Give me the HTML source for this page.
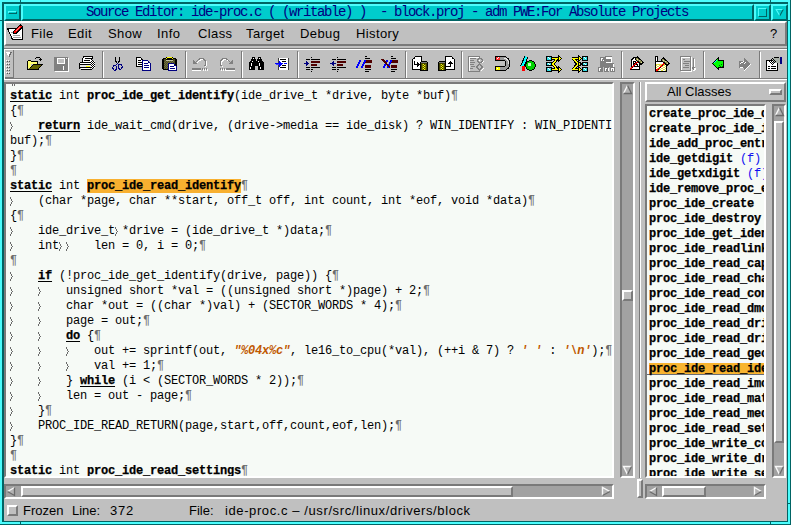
<!DOCTYPE html>
<html><head><meta charset="utf-8"><style>
html,body{margin:0;padding:0;}
body{width:791px;height:525px;position:relative;overflow:hidden;background:#4cfcfc;}
body div, body svg{position:absolute;}
.code{left:6px;top:84px;width:606px;height:392px;overflow:hidden;}
.cl{left:4px;height:15px;white-space:pre;font-family:"Liberation Mono",monospace;font-size:12px;letter-spacing:-0.2px;line-height:15px;color:#000;}
.k{font-weight:bold;-webkit-text-stroke:0.25px #000;text-decoration:underline;text-underline-offset:2px;text-decoration-thickness:1px;}
.b{font-weight:bold;-webkit-text-stroke:0.25px #000;}
.h{font-weight:bold;background:#f8b030;-webkit-text-stroke:0.25px #000;}
.s{font-weight:bold;font-style:italic;color:#c05800;}
.t{color:#808080;}
.p{color:#6c6c6c;}
.list{left:647px;top:106px;width:117px;height:370px;overflow:hidden;}
.li{left:0;width:118px;height:15px;white-space:pre;font-family:"Liberation Mono",monospace;font-size:12px;letter-spacing:-0.2px;line-height:15px;font-weight:bold;color:#000;text-indent:2px;-webkit-text-stroke:0.25px #000;}
.sel1{left:0;top:255px;width:117px;height:14px;background:#f4f6fc;}
.sel2{left:2px;top:2px;width:115px;height:11px;background:#f8b430;}
.sel3{left:0;top:13px;width:117px;height:1px;background:#686c74;}
.f{font-weight:normal;color:#1010f0;-webkit-text-stroke:0;}
</style></head><body>
<div style="left:0px;top:0px;width:791px;height:525px;background:#4cfcfc;"></div><div style="left:2px;top:2px;width:786px;height:520px;background:#006464;"></div><div style="left:790px;top:0px;width:1px;height:525px;background:#006464;"></div><div style="left:0px;top:524px;width:791px;height:1px;background:#006464;"></div><div style="left:4px;top:21px;width:783px;height:500px;background:#c0c0c0;"></div><div style="left:20px;top:0px;width:1px;height:2px;background:#006464;"></div><div style="left:0px;top:20px;width:2px;height:1px;background:#006464;"></div><div style="left:20px;top:522px;width:1px;height:2px;background:#006464;"></div><div style="left:770px;top:0px;width:1px;height:2px;background:#006464;"></div><div style="left:788px;top:20px;width:2px;height:1px;background:#006464;"></div><div style="left:788px;top:503px;width:2px;height:1px;background:#006464;"></div><div style="left:770px;top:522px;width:1px;height:2px;background:#006464;"></div><div style="left:4px;top:4px;width:17px;height:17px;background:#006464;"></div><div style="left:4px;top:4px;width:17px;height:17px;background:#4cfcfc;clip-path:polygon(0 0,100% 0,calc(100% - 2px) 2px,2px 2px,2px calc(100% - 2px),0 100%)"></div><div style="left:6px;top:6px;width:13px;height:13px;background:#00cccc;"></div><div style="left:8px;top:11px;width:9px;height:3px;background:#006464;"></div><div style="left:8px;top:11px;width:9px;height:3px;background:#4cfcfc;clip-path:polygon(0 0,100% 0,calc(100% - 1px) 1px,1px 1px,1px calc(100% - 1px),0 100%)"></div><div style="left:9px;top:12px;width:7px;height:1px;background:#00cccc;"></div><div style="left:21px;top:4px;width:733px;height:17px;background:#006464;"></div><div style="left:21px;top:4px;width:733px;height:17px;background:#4cfcfc;clip-path:polygon(0 0,100% 0,calc(100% - 2px) 2px,2px 2px,2px calc(100% - 2px),0 100%)"></div><div style="left:23px;top:6px;width:729px;height:13px;background:#00cccc;"></div><div style="left:754px;top:4px;width:17px;height:17px;background:#006464;"></div><div style="left:754px;top:4px;width:17px;height:17px;background:#4cfcfc;clip-path:polygon(0 0,100% 0,calc(100% - 2px) 2px,2px 2px,2px calc(100% - 2px),0 100%)"></div><div style="left:756px;top:6px;width:13px;height:13px;background:#00cccc;"></div><div style="left:758px;top:8px;width:9px;height:9px;background:#006464;"></div><div style="left:758px;top:8px;width:9px;height:9px;background:#4cfcfc;clip-path:polygon(0 0,100% 0,calc(100% - 1px) 1px,1px 1px,1px calc(100% - 1px),0 100%)"></div><div style="left:759px;top:9px;width:7px;height:7px;background:#00cccc;"></div><div style="left:771px;top:4px;width:17px;height:17px;background:#006464;"></div><div style="left:771px;top:4px;width:17px;height:17px;background:#4cfcfc;clip-path:polygon(0 0,100% 0,calc(100% - 2px) 2px,2px 2px,2px calc(100% - 2px),0 100%)"></div><div style="left:773px;top:6px;width:13px;height:13px;background:#00cccc;"></div><svg style="left:0;top:0" width="791" height="21"><path d="M779.8 15.8 L776.2 9.5 H783" fill="none" stroke="#4cfcfc" stroke-width="1.1"/><path d="M783.2 9.5 L779.8 15.8" fill="none" stroke="#006464" stroke-width="1.1"/></svg><div style="left:86px;top:3px;white-space:pre;font-family:'Liberation Mono',monospace;font-size:14px;letter-spacing:-1.4px;color:#000080;line-height:18px">Source Editor: ide-proc.c ( (writable) )  - block.proj - adm PWE:For Absolute Projects</div><div style="left:4px;top:21px;width:783px;height:25px;background:#7a7a7a;"></div><div style="left:4px;top:21px;width:783px;height:25px;background:#ffffff;clip-path:polygon(0 0,100% 0,calc(100% - 2px) 2px,2px 2px,2px calc(100% - 2px),0 100%)"></div><div style="left:6px;top:23px;width:779px;height:21px;background:#c0c0c0;"></div><div style="left:31px;top:26px;white-space:pre;font-family:'Liberation Sans',sans-serif;font-size:13px;color:#000;line-height:16px;letter-spacing:0.4px">File</div><div style="left:68px;top:26px;white-space:pre;font-family:'Liberation Sans',sans-serif;font-size:13px;color:#000;line-height:16px;letter-spacing:0.4px">Edit</div><div style="left:108px;top:26px;white-space:pre;font-family:'Liberation Sans',sans-serif;font-size:13px;color:#000;line-height:16px;letter-spacing:0.4px">Show</div><div style="left:157px;top:26px;white-space:pre;font-family:'Liberation Sans',sans-serif;font-size:13px;color:#000;line-height:16px;letter-spacing:0.4px">Info</div><div style="left:198px;top:26px;white-space:pre;font-family:'Liberation Sans',sans-serif;font-size:13px;color:#000;line-height:16px;letter-spacing:0.4px">Class</div><div style="left:246px;top:26px;white-space:pre;font-family:'Liberation Sans',sans-serif;font-size:13px;color:#000;line-height:16px;letter-spacing:0.4px">Target</div><div style="left:300px;top:26px;white-space:pre;font-family:'Liberation Sans',sans-serif;font-size:13px;color:#000;line-height:16px;letter-spacing:0.4px">Debug</div><div style="left:356px;top:26px;white-space:pre;font-family:'Liberation Sans',sans-serif;font-size:13px;color:#000;line-height:16px;letter-spacing:0.4px">History</div><div style="left:770px;top:26px;white-space:pre;font-family:'Liberation Sans',sans-serif;font-size:13px;color:#000;line-height:16px;letter-spacing:0.4px">?</div><div style="left:4px;top:48px;width:783px;height:1px;background:#7a7a7a;"></div><div style="left:4px;top:49px;width:783px;height:1px;background:#ffffff;"></div><div style="left:4px;top:78px;width:783px;height:1px;background:#7a7a7a;"></div><div style="left:4px;top:79px;width:783px;height:1px;background:#ffffff;"></div><div style="left:4px;top:49px;width:1px;height:30px;background:#ffffff;"></div><div style="left:5px;top:50px;width:8px;height:27px;background:#c0c0c0;"></div><div style="left:13px;top:50px;width:1px;height:28px;background:#7a7a7a;"></div><div style="left:5px;top:77px;width:8px;height:1px;background:#7a7a7a;"></div><svg style="left:5px;top:50px" width="8" height="27" shape-rendering="crispEdges"><polygon points="1,2 6,2 4,7" fill="#ffffff"/><path d="M6.5 2 L4 6.5" stroke="#6a6a6a" stroke-width="1.3"/><rect x="1" y="10" width="1" height="1" fill="#ffffff"/><rect x="2" y="11" width="1" height="1" fill="#555"/><rect x="3" y="10" width="1" height="1" fill="#ffffff"/><rect x="4" y="11" width="1" height="1" fill="#555"/><rect x="1" y="13" width="1" height="1" fill="#ffffff"/><rect x="2" y="14" width="1" height="1" fill="#555"/><rect x="3" y="13" width="1" height="1" fill="#ffffff"/><rect x="4" y="14" width="1" height="1" fill="#555"/><rect x="1" y="16" width="1" height="1" fill="#ffffff"/><rect x="2" y="17" width="1" height="1" fill="#555"/><rect x="3" y="16" width="1" height="1" fill="#ffffff"/><rect x="4" y="17" width="1" height="1" fill="#555"/><rect x="1" y="19" width="1" height="1" fill="#ffffff"/><rect x="2" y="20" width="1" height="1" fill="#555"/><rect x="3" y="19" width="1" height="1" fill="#ffffff"/><rect x="4" y="20" width="1" height="1" fill="#555"/><rect x="1" y="22" width="1" height="1" fill="#ffffff"/><rect x="2" y="23" width="1" height="1" fill="#555"/><rect x="3" y="22" width="1" height="1" fill="#ffffff"/><rect x="4" y="23" width="1" height="1" fill="#555"/></svg><div style="left:102px;top:51px;width:1px;height:27px;background:#7a7a7a;"></div><div style="left:103px;top:52px;width:1px;height:26px;background:#ffffff;"></div><div style="left:185px;top:51px;width:1px;height:27px;background:#7a7a7a;"></div><div style="left:186px;top:52px;width:1px;height:26px;background:#ffffff;"></div><div style="left:241px;top:51px;width:1px;height:27px;background:#7a7a7a;"></div><div style="left:242px;top:52px;width:1px;height:26px;background:#ffffff;"></div><div style="left:297px;top:51px;width:1px;height:27px;background:#7a7a7a;"></div><div style="left:298px;top:52px;width:1px;height:26px;background:#ffffff;"></div><div style="left:405px;top:51px;width:1px;height:27px;background:#7a7a7a;"></div><div style="left:406px;top:52px;width:1px;height:26px;background:#ffffff;"></div><div style="left:461px;top:51px;width:1px;height:27px;background:#7a7a7a;"></div><div style="left:462px;top:52px;width:1px;height:26px;background:#ffffff;"></div><div style="left:621px;top:51px;width:1px;height:27px;background:#7a7a7a;"></div><div style="left:622px;top:52px;width:1px;height:26px;background:#ffffff;"></div><div style="left:703px;top:51px;width:1px;height:27px;background:#7a7a7a;"></div><div style="left:704px;top:52px;width:1px;height:26px;background:#ffffff;"></div><div style="left:759px;top:51px;width:1px;height:27px;background:#7a7a7a;"></div><div style="left:760px;top:52px;width:1px;height:26px;background:#ffffff;"></div><div style="left:4px;top:82px;width:610px;height:396px;background:#ffffff;"></div><div style="left:4px;top:82px;width:610px;height:396px;background:#7a7a7a;clip-path:polygon(0 0,100% 0,calc(100% - 2px) 2px,2px 2px,2px calc(100% - 2px),0 100%)"></div><div style="left:6px;top:84px;width:606px;height:392px;background:#f6faf6;"></div><div style="left:620px;top:82px;width:15px;height:396px;background:#ffffff;"></div><div style="left:620px;top:82px;width:15px;height:396px;background:#7a7a7a;clip-path:polygon(0 0,100% 0,calc(100% - 2px) 2px,2px 2px,2px calc(100% - 2px),0 100%)"></div><div style="left:622px;top:84px;width:11px;height:392px;background:#a2a2a2;"></div><svg style="left:0;top:0" width="791" height="525"><polygon points="627.5,85 632,94 623,94" fill="#b4b4b4"/><path d="M623.5 93.5 L627.5 85.5" stroke="#f8f8f8" stroke-width="1.4" fill="none"/><path d="M627.5 85.5 L631.5 93.5 H623.5" stroke="#6a6a6a" stroke-width="1.3" fill="none"/></svg><svg style="left:0;top:0" width="791" height="525"><polygon points="623,466 632,466 627.5,475" fill="#b4b4b4"/><path d="M627.5 474.5 L623.5 466.5 H631.5" stroke="#f8f8f8" stroke-width="1.4" fill="none"/><path d="M631.5 466.5 L627.5 474.5" stroke="#6a6a6a" stroke-width="1.3" fill="none"/></svg><div style="left:622px;top:290px;width:11px;height:11px;background:#7a7a7a;"></div><div style="left:622px;top:290px;width:11px;height:11px;background:#ffffff;clip-path:polygon(0 0,100% 0,calc(100% - 2px) 2px,2px 2px,2px calc(100% - 2px),0 100%)"></div><div style="left:624px;top:292px;width:7px;height:7px;background:#c0c0c0;"></div><div style="left:4px;top:484px;width:610px;height:15px;background:#ffffff;"></div><div style="left:4px;top:484px;width:610px;height:15px;background:#7a7a7a;clip-path:polygon(0 0,100% 0,calc(100% - 2px) 2px,2px 2px,2px calc(100% - 2px),0 100%)"></div><div style="left:6px;top:486px;width:606px;height:11px;background:#a2a2a2;"></div><svg style="left:0;top:0" width="791" height="525"><polygon points="7,491.5 15,487 15,496" fill="#b4b4b4"/><path d="M7.5 491.5 L14.5 487.5" stroke="#f8f8f8" stroke-width="1.4" fill="none"/><path d="M14.5 487.5 V495.5 L7.5 491.5" stroke="#6a6a6a" stroke-width="1.3" fill="none"/></svg><svg style="left:0;top:0" width="791" height="525"><polygon points="602,487 610.5,491.5 602,496" fill="#b4b4b4"/><path d="M602.5 495.5 V487.5 L610.0 491.5" stroke="#f8f8f8" stroke-width="1.4" fill="none"/><path d="M610.0 491.5 L602.5 495.5" stroke="#6a6a6a" stroke-width="1.3" fill="none"/></svg><div style="left:21px;top:486px;width:492px;height:11px;background:#7a7a7a;"></div><div style="left:21px;top:486px;width:492px;height:11px;background:#ffffff;clip-path:polygon(0 0,100% 0,calc(100% - 2px) 2px,2px 2px,2px calc(100% - 2px),0 100%)"></div><div style="left:23px;top:488px;width:488px;height:7px;background:#c0c0c0;"></div><div style="left:639px;top:82px;width:1px;height:396px;background:#7a7a7a;"></div><div style="left:640px;top:82px;width:1px;height:396px;background:#ffffff;"></div><div style="left:637px;top:479px;width:6px;height:19px;background:#7a7a7a;"></div><div style="left:637px;top:479px;width:6px;height:19px;background:#ffffff;clip-path:polygon(0 0,100% 0,calc(100% - 2px) 2px,2px 2px,2px calc(100% - 2px),0 100%)"></div><div style="left:639px;top:481px;width:2px;height:15px;background:#c0c0c0;"></div><div style="left:645px;top:82px;width:141px;height:20px;background:#7a7a7a;"></div><div style="left:645px;top:82px;width:141px;height:20px;background:#ffffff;clip-path:polygon(0 0,100% 0,calc(100% - 2px) 2px,2px 2px,2px calc(100% - 2px),0 100%)"></div><div style="left:647px;top:84px;width:137px;height:16px;background:#c0c0c0;"></div><div style="left:667px;top:84px;white-space:pre;font-family:'Liberation Sans',sans-serif;font-size:13px;color:#000;line-height:16px">All Classes</div><div style="left:769px;top:89px;width:13px;height:6px;background:#7a7a7a;"></div><div style="left:769px;top:89px;width:13px;height:6px;background:#ffffff;clip-path:polygon(0 0,100% 0,calc(100% - 2px) 2px,2px 2px,2px calc(100% - 2px),0 100%)"></div><div style="left:771px;top:91px;width:9px;height:2px;background:#c0c0c0;"></div><div style="left:645px;top:104px;width:121px;height:374px;background:#ffffff;"></div><div style="left:645px;top:104px;width:121px;height:374px;background:#7a7a7a;clip-path:polygon(0 0,100% 0,calc(100% - 2px) 2px,2px 2px,2px calc(100% - 2px),0 100%)"></div><div style="left:647px;top:106px;width:117px;height:370px;background:#f6faf6;"></div><div style="left:772px;top:104px;width:14px;height:374px;background:#ffffff;"></div><div style="left:772px;top:104px;width:14px;height:374px;background:#7a7a7a;clip-path:polygon(0 0,100% 0,calc(100% - 2px) 2px,2px 2px,2px calc(100% - 2px),0 100%)"></div><div style="left:774px;top:106px;width:10px;height:370px;background:#a2a2a2;"></div><svg style="left:0;top:0" width="791" height="525"><polygon points="779.5,107 784,116 775,116" fill="#b4b4b4"/><path d="M775.5 115.5 L779.5 107.5" stroke="#f8f8f8" stroke-width="1.4" fill="none"/><path d="M779.5 107.5 L783.5 115.5 H775.5" stroke="#6a6a6a" stroke-width="1.3" fill="none"/></svg><svg style="left:0;top:0" width="791" height="525"><polygon points="775,466 784,466 779.5,475" fill="#b4b4b4"/><path d="M779.5 474.5 L775.5 466.5 H783.5" stroke="#f8f8f8" stroke-width="1.4" fill="none"/><path d="M783.5 466.5 L779.5 474.5" stroke="#6a6a6a" stroke-width="1.3" fill="none"/></svg><div style="left:774px;top:121px;width:10px;height:322px;background:#7a7a7a;"></div><div style="left:774px;top:121px;width:10px;height:322px;background:#ffffff;clip-path:polygon(0 0,100% 0,calc(100% - 2px) 2px,2px 2px,2px calc(100% - 2px),0 100%)"></div><div style="left:776px;top:123px;width:6px;height:318px;background:#c0c0c0;"></div><div style="left:645px;top:484px;width:121px;height:15px;background:#ffffff;"></div><div style="left:645px;top:484px;width:121px;height:15px;background:#7a7a7a;clip-path:polygon(0 0,100% 0,calc(100% - 2px) 2px,2px 2px,2px calc(100% - 2px),0 100%)"></div><div style="left:647px;top:486px;width:117px;height:11px;background:#a2a2a2;"></div><svg style="left:0;top:0" width="791" height="525"><polygon points="649,491.5 657,487 657,496" fill="#b4b4b4"/><path d="M649.5 491.5 L656.5 487.5" stroke="#f8f8f8" stroke-width="1.4" fill="none"/><path d="M656.5 487.5 V495.5 L649.5 491.5" stroke="#6a6a6a" stroke-width="1.3" fill="none"/></svg><svg style="left:0;top:0" width="791" height="525"><polygon points="754,487 762,491.5 754,496" fill="#b4b4b4"/><path d="M754.5 495.5 V487.5 L761.5 491.5" stroke="#f8f8f8" stroke-width="1.4" fill="none"/><path d="M761.5 491.5 L754.5 495.5" stroke="#6a6a6a" stroke-width="1.3" fill="none"/></svg><div style="left:662px;top:486px;width:44px;height:11px;background:#7a7a7a;"></div><div style="left:662px;top:486px;width:44px;height:11px;background:#ffffff;clip-path:polygon(0 0,100% 0,calc(100% - 2px) 2px,2px 2px,2px calc(100% - 2px),0 100%)"></div><div style="left:664px;top:488px;width:40px;height:7px;background:#c0c0c0;"></div><div style="left:7px;top:505px;width:11px;height:11px;background:#7a7a7a;"></div><div style="left:7px;top:505px;width:11px;height:11px;background:#ffffff;clip-path:polygon(0 0,100% 0,calc(100% - 2px) 2px,2px 2px,2px calc(100% - 2px),0 100%)"></div><div style="left:9px;top:507px;width:7px;height:7px;background:#c0c0c0;"></div><div style="left:23px;top:503px;white-space:pre;font-family:'Liberation Sans',sans-serif;font-size:13px;color:#000;line-height:16px">Frozen</div><div style="left:72px;top:503px;white-space:pre;font-family:'Liberation Sans',sans-serif;font-size:13px;color:#000;line-height:16px">Line:</div><div style="left:110px;top:503px;white-space:pre;font-family:'Liberation Sans',sans-serif;font-size:13px;color:#000;line-height:16px;letter-spacing:0.8px">372</div><div style="left:189px;top:503px;white-space:pre;font-family:'Liberation Sans',sans-serif;font-size:13px;color:#000;line-height:16px">File:</div><div style="left:225px;top:503px;white-space:pre;font-family:'Liberation Sans',sans-serif;font-size:13px;color:#000;line-height:16px;letter-spacing:0.6px">ide-proc.c – /usr/src/linux/drivers/block</div>
<svg style="left:0;top:0" width="791" height="82" shape-rendering="crispEdges"><polygon points="7.5,28.5 22.5,28.5 22.5,39.5 12.5,39.5" fill="#ffffff" stroke="#000000" stroke-width="1"/><rect x="13" y="35" width="7" height="1" fill="#a0a0a0"/><rect x="13" y="37" width="8" height="1" fill="#a0a0a0"/><rect x="11" y="32" width="4" height="1" fill="#a0a0a0"/><polygon points="20,24 23,27 16,34 13,34 13,31" fill="#000000"/><polygon points="20.5,25.5 21.8,26.8 15.5,33 14,33 14,31.5" fill="#ff0000"/><path d="M19.5 26.5 L15 31" stroke="#ffb0b0" stroke-width="0.8" fill="none"/><rect x="28" y="60" width="3" height="1" fill="#000000"/><rect x="31" y="61" width="7" height="1" fill="#000000"/><rect x="27" y="61" width="1" height="9" fill="#000000"/><rect x="28" y="61" width="3" height="1" fill="#ffff70"/><rect x="31" y="62" width="6" height="2" fill="#ffff70"/><rect x="28" y="62" width="3" height="6" fill="#ffff70"/><rect x="29" y="68" width="1" height="1" fill="#ffff70"/><rect x="37" y="62" width="1" height="2" fill="#000000"/><polygon points="29,69 33,64 43,64 38,69" fill="#606000"/><path d="M29.5 68.5 L33.5 64.5 H42.5 L38 69" stroke="#000000" stroke-width="1" fill="none"/><rect x="27" y="69" width="12" height="1" fill="#000000"/><path d="M35.5 59.2 C36.2 56.6 39.6 56.4 40.8 59" stroke="#000000" stroke-width="1.1" fill="none"/><polygon points="39,59 42.6,59 40.8,61.2" fill="#000000"/><rect x="55" y="58" width="14" height="14" fill="#ffffff"/><rect x="54" y="57" width="14" height="14" fill="#808080"/><rect x="57" y="58" width="8" height="6" fill="#ffffff"/><rect x="58" y="59" width="6" height="4" fill="#c0c0c0"/><rect x="66" y="58" width="1" height="1" fill="#ffffff"/><rect x="63" y="66" width="1" height="4" fill="#ffffff"/><rect x="84" y="56" width="9" height="1" fill="#000000"/><polygon points="83.5,57 92,57 91,61.5 82,61.5" fill="#ffffff"/><path d="M83.5 56.5 L82 61.5" stroke="#000000" stroke-width="1" fill="none"/><path d="M92.5 56.5 L91.3 61.5" stroke="#000000" stroke-width="1" fill="none"/><rect x="85" y="58" width="6" height="1" fill="#000000"/><rect x="84" y="60" width="6" height="1" fill="#000000"/><rect x="80" y="62" width="12" height="1" fill="#000000"/><rect x="79" y="63" width="1" height="6" fill="#000000"/><rect x="80" y="63" width="11" height="1" fill="#ffffff"/><rect x="80" y="64" width="12" height="1" fill="#000000"/><rect x="80" y="65" width="11" height="2" fill="#e8e8e8"/><rect x="86" y="66" width="4" height="1" fill="#ffff00"/><rect x="80" y="67" width="12" height="1" fill="#000000"/><rect x="81" y="68" width="9" height="1" fill="#ffffff"/><rect x="81" y="69" width="11" height="1" fill="#000000"/><rect x="91" y="60" width="1" height="1" fill="#ffffff"/><rect x="92" y="60" width="1" height="1" fill="#000000"/><rect x="91" y="61" width="1" height="1" fill="#000000"/><rect x="92" y="61" width="1" height="1" fill="#ffffff"/><rect x="93" y="61" width="1" height="1" fill="#000000"/><rect x="94" y="61" width="1" height="1" fill="#ffffff"/><rect x="91" y="62" width="1" height="1" fill="#ffffff"/><rect x="92" y="62" width="1" height="1" fill="#000000"/><rect x="93" y="62" width="1" height="1" fill="#ffffff"/><rect x="94" y="62" width="1" height="1" fill="#000000"/><rect x="91" y="63" width="1" height="1" fill="#000000"/><rect x="92" y="63" width="1" height="1" fill="#ffffff"/><rect x="93" y="63" width="1" height="1" fill="#000000"/><rect x="94" y="63" width="1" height="1" fill="#ffffff"/><rect x="91" y="64" width="1" height="1" fill="#ffffff"/><rect x="92" y="64" width="1" height="1" fill="#000000"/><rect x="93" y="64" width="1" height="1" fill="#ffffff"/><rect x="94" y="64" width="1" height="1" fill="#000000"/><rect x="91" y="65" width="1" height="1" fill="#000000"/><rect x="92" y="65" width="1" height="1" fill="#ffffff"/><rect x="93" y="65" width="1" height="1" fill="#000000"/><rect x="94" y="65" width="1" height="1" fill="#ffffff"/><rect x="91" y="66" width="1" height="1" fill="#ffffff"/><rect x="92" y="66" width="1" height="1" fill="#000000"/><rect x="93" y="66" width="1" height="1" fill="#ffffff"/><rect x="94" y="66" width="1" height="1" fill="#000000"/><rect x="91" y="67" width="1" height="1" fill="#000000"/><rect x="92" y="67" width="1" height="1" fill="#ffffff"/><rect x="93" y="67" width="1" height="1" fill="#000000"/><rect x="94" y="67" width="1" height="1" fill="#ffffff"/><rect x="91" y="68" width="1" height="1" fill="#ffffff"/><rect x="92" y="68" width="1" height="1" fill="#000000"/><path d="M115.5 57 V61 L117.5 63.5 L119.5 61 V57" stroke="#000000" stroke-width="1" fill="none"/><path d="M117.5 63.5 L115 66" stroke="#000080" stroke-width="1" fill="none"/><path d="M117.5 63.5 L120 65" stroke="#000080" stroke-width="1" fill="none"/><ellipse cx="114.8" cy="67.8" rx="1.9" ry="2.4" fill="none" stroke="#000080" stroke-width="1"/><ellipse cx="120.2" cy="66.8" rx="1.9" ry="2.4" fill="none" stroke="#000080" stroke-width="1"/><polygon points="136.5,57.5 140.5,57.5 143.5,60.5 143.5,66.5 136.5,66.5" fill="#fff" stroke="#000000" stroke-width="1"/><rect x="141" y="59" width="1" height="1" fill="#000000"/><rect x="138" y="60" width="3" height="1" fill="#000000"/><rect x="138" y="62" width="4" height="1" fill="#000000"/><rect x="138" y="64" width="4" height="1" fill="#000000"/><polygon points="142.5,60.5 147.5,60.5 150.5,63.5 150.5,70.5 142.5,70.5" fill="#fff" stroke="#000080" stroke-width="1"/><rect x="148" y="62" width="1" height="1" fill="#000080"/><rect x="144" y="63" width="4" height="1" fill="#000080"/><rect x="144" y="65" width="5" height="1" fill="#000080"/><rect x="144" y="67" width="5" height="1" fill="#000080"/><rect x="163" y="58" width="13" height="12" fill="#000000"/><rect x="162" y="59" width="15" height="10" fill="#000000"/><rect x="164" y="59" width="11" height="10" fill="#4c4c24"/><rect x="165" y="61" width="1" height="1" fill="#707040"/><rect x="167" y="61" width="1" height="1" fill="#707040"/><rect x="169" y="61" width="1" height="1" fill="#707040"/><rect x="171" y="61" width="1" height="1" fill="#707040"/><rect x="173" y="61" width="1" height="1" fill="#707040"/><rect x="164" y="62" width="1" height="1" fill="#707040"/><rect x="166" y="62" width="1" height="1" fill="#707040"/><rect x="168" y="62" width="1" height="1" fill="#707040"/><rect x="170" y="62" width="1" height="1" fill="#707040"/><rect x="172" y="62" width="1" height="1" fill="#707040"/><rect x="165" y="63" width="1" height="1" fill="#707040"/><rect x="167" y="63" width="1" height="1" fill="#707040"/><rect x="169" y="63" width="1" height="1" fill="#707040"/><rect x="171" y="63" width="1" height="1" fill="#707040"/><rect x="173" y="63" width="1" height="1" fill="#707040"/><rect x="164" y="64" width="1" height="1" fill="#707040"/><rect x="166" y="64" width="1" height="1" fill="#707040"/><rect x="168" y="64" width="1" height="1" fill="#707040"/><rect x="170" y="64" width="1" height="1" fill="#707040"/><rect x="172" y="64" width="1" height="1" fill="#707040"/><rect x="165" y="65" width="1" height="1" fill="#707040"/><rect x="167" y="65" width="1" height="1" fill="#707040"/><rect x="169" y="65" width="1" height="1" fill="#707040"/><rect x="171" y="65" width="1" height="1" fill="#707040"/><rect x="173" y="65" width="1" height="1" fill="#707040"/><rect x="164" y="66" width="1" height="1" fill="#707040"/><rect x="166" y="66" width="1" height="1" fill="#707040"/><rect x="168" y="66" width="1" height="1" fill="#707040"/><rect x="170" y="66" width="1" height="1" fill="#707040"/><rect x="172" y="66" width="1" height="1" fill="#707040"/><rect x="165" y="67" width="1" height="1" fill="#707040"/><rect x="167" y="67" width="1" height="1" fill="#707040"/><rect x="169" y="67" width="1" height="1" fill="#707040"/><rect x="171" y="67" width="1" height="1" fill="#707040"/><rect x="173" y="67" width="1" height="1" fill="#707040"/><rect x="164" y="68" width="1" height="1" fill="#707040"/><rect x="166" y="68" width="1" height="1" fill="#707040"/><rect x="168" y="68" width="1" height="1" fill="#707040"/><rect x="170" y="68" width="1" height="1" fill="#707040"/><rect x="172" y="68" width="1" height="1" fill="#707040"/><rect x="166" y="57" width="7" height="3" fill="#000000"/><rect x="167" y="57" width="5" height="1" fill="#ffff00"/><rect x="166" y="58" width="1" height="1" fill="#ffff00"/><rect x="172" y="58" width="1" height="1" fill="#ffff00"/><rect x="166" y="60" width="7" height="1" fill="#c0c0a0"/><polygon points="168.5,63.5 173.5,63.5 176.5,66.5 176.5,70.5 168.5,70.5" fill="#fff" stroke="#000080" stroke-width="1"/><rect x="174" y="65" width="1" height="1" fill="#000080"/><rect x="170" y="66" width="4" height="1" fill="#000080"/><rect x="170" y="68" width="5" height="1" fill="#000080"/><path d="M197 63 Q200.5 58.5 204 59.5 Q208.5 62 205.5 67.5" stroke="#ffffff" stroke-width="1.1" fill="none"/><path d="M196 62 Q199.5 57.5 203 58.5 Q207.5 61 204.5 66.5" stroke="#808080" stroke-width="1.2" fill="none"/><polygon points="193,59.5 197,63.5 193,64" fill="#808080"/><rect x="192" y="68" width="9" height="2" fill="#808080"/><rect x="192" y="70" width="9" height="1" fill="#ffffff"/><rect x="202" y="68" width="1" height="2" fill="#808080"/><rect x="203" y="69" width="1" height="2" fill="#ffffff"/><rect x="204" y="68" width="1" height="2" fill="#808080"/><rect x="205" y="69" width="1" height="2" fill="#ffffff"/><rect x="206" y="68" width="1" height="2" fill="#808080"/><rect x="207" y="69" width="1" height="2" fill="#ffffff"/><path d="M231 63 Q227.5 58.5 224 59.5 Q219.5 62 222.5 67.5" stroke="#ffffff" stroke-width="1.1" fill="none"/><path d="M230 62 Q226.5 57.5 223 58.5 Q218.5 61 221.5 66.5" stroke="#808080" stroke-width="1.2" fill="none"/><polygon points="233,59.5 229,63.5 233,64" fill="#808080"/><rect x="226" y="68" width="9" height="2" fill="#808080"/><rect x="226" y="70" width="9" height="1" fill="#ffffff"/><rect x="220" y="68" width="1" height="2" fill="#808080"/><rect x="221" y="69" width="1" height="2" fill="#ffffff"/><rect x="222" y="68" width="1" height="2" fill="#808080"/><rect x="223" y="69" width="1" height="2" fill="#ffffff"/><rect x="224" y="68" width="1" height="2" fill="#808080"/><rect x="225" y="69" width="1" height="2" fill="#ffffff"/><rect x="252" y="57" width="3" height="2" fill="#000000"/><rect x="258" y="57" width="3" height="2" fill="#000000"/><rect x="251" y="59" width="5" height="3" fill="#000000"/><rect x="257" y="59" width="5" height="3" fill="#000000"/><rect x="249" y="62" width="6" height="8" fill="#000000"/><rect x="258" y="62" width="6" height="8" fill="#000000"/><rect x="254" y="61" width="5" height="5" fill="#000000"/><rect x="250" y="61" width="1" height="1" fill="#000000"/><rect x="262" y="61" width="1" height="1" fill="#000000"/><rect x="253" y="58" width="1" height="1" fill="#ffffff"/><rect x="259" y="58" width="1" height="1" fill="#ffffff"/><rect x="252" y="61" width="1" height="1" fill="#ffffff"/><rect x="258" y="61" width="1" height="1" fill="#ffffff"/><rect x="251" y="63" width="1" height="3" fill="#ffffff"/><rect x="259" y="63" width="1" height="3" fill="#ffffff"/><rect x="250" y="67" width="1" height="2" fill="#ffffff"/><rect x="260" y="67" width="1" height="2" fill="#ffffff"/><rect x="279" y="58" width="9" height="12" fill="#ffffff"/><rect x="278" y="58" width="1" height="12" fill="#404040"/><rect x="288" y="58" width="1" height="12" fill="#404040"/><rect x="280" y="59" width="6" height="1" fill="#000000"/><rect x="282" y="61" width="4" height="1" fill="#000000"/><rect x="284" y="63" width="3" height="1" fill="#0000ff"/><rect x="282" y="65" width="4" height="1" fill="#000000"/><rect x="280" y="67" width="6" height="1" fill="#000000"/><rect x="275" y="63" width="5" height="1" fill="#0000ff"/><rect x="276" y="64" width="3" height="1" fill="#4040ff"/><polygon points="279,60.5 283,63.8 279,67" fill="#0000ff"/><rect x="311" y="57" width="1" height="1" fill="#000000"/><rect x="311" y="71" width="1" height="1" fill="#000000"/><rect x="306" y="59" width="4" height="1" fill="#000000"/><rect x="311" y="59" width="9" height="1" fill="#000000"/><rect x="311" y="61" width="9" height="2" fill="#500000"/><rect x="311" y="64" width="6" height="2" fill="#500000"/><rect x="306" y="67" width="4" height="1" fill="#000000"/><rect x="311" y="67" width="9" height="1" fill="#000000"/><rect x="306" y="69" width="4" height="1" fill="#000000"/><rect x="311" y="69" width="2" height="1" fill="#000000"/><rect x="304" y="63" width="4" height="1" fill="#000080"/><polygon points="306,60.5 309.5,63.5 306,66.5" fill="#000080"/><rect x="337" y="57" width="1" height="1" fill="#000000"/><rect x="337" y="71" width="1" height="1" fill="#000000"/><rect x="332" y="59" width="4" height="1" fill="#000000"/><rect x="337" y="59" width="9" height="1" fill="#000000"/><rect x="337" y="61" width="9" height="2" fill="#500000"/><rect x="337" y="64" width="6" height="2" fill="#500000"/><rect x="332" y="67" width="4" height="1" fill="#000000"/><rect x="337" y="67" width="9" height="1" fill="#000000"/><rect x="332" y="69" width="4" height="1" fill="#000000"/><rect x="337" y="69" width="2" height="1" fill="#000000"/><rect x="332" y="63" width="4" height="1" fill="#000080"/><polygon points="334,60.5 330.5,63.5 334,66.5" fill="#000080"/><rect x="365" y="56" width="2" height="1" fill="#000000"/><rect x="365" y="58" width="5" height="1" fill="#000000"/><rect x="365" y="60" width="7" height="3" fill="#500000"/><rect x="365" y="65" width="6" height="3" fill="#500000"/><rect x="365" y="69" width="6" height="1" fill="#000000"/><rect x="365" y="71" width="4" height="1" fill="#000000"/><rect x="356" y="67" width="2" height="1" fill="#0000ff"/><rect x="356" y="66" width="2" height="1" fill="#0000ff"/><rect x="357" y="65" width="2" height="1" fill="#0000ff"/><rect x="357" y="64" width="2" height="1" fill="#0000ff"/><rect x="358" y="63" width="2" height="1" fill="#0000ff"/><rect x="358" y="62" width="2" height="1" fill="#0000ff"/><rect x="359" y="61" width="2" height="1" fill="#0000ff"/><rect x="359" y="60" width="2" height="1" fill="#0000ff"/><rect x="361" y="67" width="2" height="1" fill="#0000ff"/><rect x="361" y="66" width="2" height="1" fill="#0000ff"/><rect x="362" y="65" width="2" height="1" fill="#0000ff"/><rect x="362" y="64" width="2" height="1" fill="#0000ff"/><rect x="363" y="63" width="2" height="1" fill="#0000ff"/><rect x="363" y="62" width="2" height="1" fill="#0000ff"/><rect x="364" y="61" width="2" height="1" fill="#0000ff"/><rect x="364" y="60" width="2" height="1" fill="#0000ff"/><rect x="391" y="56" width="2" height="1" fill="#000000"/><rect x="391" y="58" width="5" height="1" fill="#000000"/><rect x="391" y="60" width="7" height="3" fill="#500000"/><rect x="391" y="65" width="6" height="3" fill="#500000"/><rect x="391" y="69" width="6" height="1" fill="#000000"/><rect x="391" y="71" width="4" height="1" fill="#000000"/><rect x="383" y="67" width="2" height="1" fill="#0000ff"/><rect x="383" y="66" width="2" height="1" fill="#0000ff"/><rect x="384" y="65" width="2" height="1" fill="#0000ff"/><rect x="384" y="64" width="2" height="1" fill="#0000ff"/><rect x="385" y="63" width="2" height="1" fill="#0000ff"/><rect x="385" y="62" width="2" height="1" fill="#0000ff"/><rect x="386" y="61" width="2" height="1" fill="#0000ff"/><rect x="386" y="60" width="2" height="1" fill="#0000ff"/><rect x="387" y="67" width="2" height="1" fill="#0000ff"/><rect x="387" y="66" width="2" height="1" fill="#0000ff"/><rect x="388" y="65" width="2" height="1" fill="#0000ff"/><rect x="388" y="64" width="2" height="1" fill="#0000ff"/><rect x="389" y="63" width="2" height="1" fill="#0000ff"/><rect x="389" y="62" width="2" height="1" fill="#0000ff"/><rect x="390" y="61" width="2" height="1" fill="#0000ff"/><rect x="390" y="60" width="2" height="1" fill="#0000ff"/><path d="M382 59 L390 67.5" stroke="#500000" stroke-width="1.8" fill="none"/><polygon points="412.5,59.5 415.5,56.5 421.5,56.5 421.5,69.5 412.5,69.5" fill="#fff" stroke="#000" stroke-width="1"/><rect x="414" y="58" width="1" height="1" fill="#000000"/><rect x="414" y="61" width="1" height="4" fill="#000000"/><rect x="415" y="64" width="3" height="1" fill="#000000"/><polygon points="417,61.5 420.5,64.5 417,67.5" fill="#000000"/><rect x="420" y="62" width="8" height="9" fill="#000000"/><rect x="421" y="61" width="6" height="1" fill="#000000"/><rect x="421" y="62" width="6" height="1" fill="#808080"/><rect x="421" y="63" width="6" height="7" fill="#404000"/><rect x="423" y="64" width="1" height="1" fill="#ffff00"/><rect x="424" y="65" width="1" height="1" fill="#ffff00"/><rect x="423" y="66" width="1" height="1" fill="#ffff00"/><rect x="424" y="67" width="1" height="1" fill="#ffff00"/><rect x="423" y="68" width="1" height="1" fill="#ffff00"/><rect x="424" y="69" width="1" height="1" fill="#ffff00"/><rect x="422" y="64" width="1" height="6" fill="#808000"/><rect x="425" y="64" width="1" height="6" fill="#808000"/><polygon points="445.5,56.5 451.5,56.5 454.5,59.5 454.5,69.5 445.5,69.5" fill="#fff" stroke="#000" stroke-width="1"/><rect x="452" y="58" width="1" height="1" fill="#000000"/><rect x="450" y="63" width="1" height="4" fill="#000000"/><rect x="446" y="66" width="4" height="1" fill="#000000"/><polygon points="447.5,64 450.5,60.5 453.5,64" fill="#000000"/><rect x="438" y="62" width="8" height="9" fill="#000000"/><rect x="439" y="61" width="6" height="1" fill="#000000"/><rect x="439" y="62" width="6" height="1" fill="#808080"/><rect x="439" y="63" width="6" height="7" fill="#404000"/><rect x="441" y="64" width="1" height="1" fill="#ffff00"/><rect x="442" y="65" width="1" height="1" fill="#ffff00"/><rect x="441" y="66" width="1" height="1" fill="#ffff00"/><rect x="442" y="67" width="1" height="1" fill="#ffff00"/><rect x="441" y="68" width="1" height="1" fill="#ffff00"/><rect x="442" y="69" width="1" height="1" fill="#ffff00"/><rect x="440" y="64" width="1" height="6" fill="#808000"/><rect x="443" y="64" width="1" height="6" fill="#808000"/><rect x="468" y="56" width="12" height="16" fill="#808080"/><rect x="469" y="57" width="10" height="14" fill="#ffffff"/><rect x="470" y="58" width="9" height="13" fill="#c0c0c0"/><rect x="470" y="58" width="6" height="1" fill="#808080"/><rect x="470" y="60" width="4" height="1" fill="#808080"/><rect x="470" y="62" width="5" height="1" fill="#808080"/><rect x="470" y="64" width="4" height="1" fill="#808080"/><rect x="471" y="66" width="4" height="1" fill="#808080"/><rect x="470" y="68" width="3" height="1" fill="#808080"/><circle cx="480" cy="60.5" r="2.4" fill="#c0c0c0" stroke="#808080" stroke-width="1.3"/><rect x="479" y="60" width="1" height="1" fill="#ffffff"/><path d="M476.5 67 L479.5 64 L482.5 67 L479.5 70 Z" fill="#c0c0c0" stroke="#808080" stroke-width="1"/><path d="M481 71 L484 68" stroke="#ffffff" stroke-width="1" fill="none"/><path d="M482 63 L484 61" stroke="#ffffff" stroke-width="1" fill="none"/><path d="M495 56 H503 A7.5 7.5 0 0 1 503 71 H495 Z M495 61 H503 A2.5 2.5 0 0 1 503 66 H495 Z" fill="#000" fill-rule="evenodd"/><path d="M500 57 H503 A6.5 6.5 0 0 1 503 70 H500 V67 H503 A3.5 3.5 0 0 0 503 60 H500 Z" fill="#9a9a9a"/><path d="M504 58 A5.5 5.5 0 0 1 508.5 64" stroke="#e8e8e8" stroke-width="1.2" fill="none"/><rect x="496" y="57" width="4" height="3" fill="#ff3030"/><rect x="497" y="58" width="1" height="1" fill="#ffffff"/><rect x="498" y="57" width="1" height="1" fill="#ffffff"/><rect x="496" y="67" width="4" height="3" fill="#ffff00"/><rect x="497" y="68" width="1" height="1" fill="#ffffff"/><polygon points="525,56 527.5,57.5 524,66.5 520.5,66" fill="#00ffff"/><path d="M525 56 L520.5 66" stroke="#000000" stroke-width="1" fill="none"/><path d="M527.5 57.5 L524.5 66" stroke="#000000" stroke-width="1" fill="none"/><rect x="522" y="66" width="3" height="5" fill="#ff0000"/><circle cx="530.5" cy="65.5" r="5.3" fill="#000"/><circle cx="530.5" cy="65.5" r="4.3" fill="#00d000"/><circle cx="529.3" cy="64.3" r="1.8" fill="#c0ffc0"/><rect x="546" y="56" width="6" height="5" fill="#000000"/><rect x="547" y="57" width="4" height="3" fill="#30d8e0"/><rect x="548" y="57" width="1" height="1" fill="#ffffff"/><rect x="549" y="58" width="1" height="1" fill="#ffffff"/><rect x="546" y="62" width="6" height="4" fill="#000000"/><rect x="547" y="63" width="4" height="2" fill="#30d8e0"/><rect x="548" y="63" width="1" height="1" fill="#ffffff"/><rect x="549" y="64" width="1" height="1" fill="#ffffff"/><rect x="546" y="67" width="6" height="5" fill="#000000"/><rect x="547" y="68" width="4" height="3" fill="#30d8e0"/><rect x="548" y="68" width="1" height="1" fill="#ffffff"/><rect x="549" y="69" width="1" height="1" fill="#ffffff"/><path d="M552 58.5 H559 M552 69.5 H559 M557 58.5 L553 64 L557 69.5" stroke="#000000" stroke-width="3.2" fill="none"/><path d="M552 58.5 H559 M552 69.5 H559 M557 58.5 L553 64 L557 69.5" stroke="#ffff00" stroke-width="1.4" fill="none"/><polygon points="558,55.0 562.5,58.5 558,62.0" fill="#000000"/><polygon points="558.8,56.5 561,58.5 558.8,60.5" fill="#ffff00"/><polygon points="558,66.0 562.5,69.5 558,73.0" fill="#000000"/><polygon points="558.8,67.5 561,69.5 558.8,71.5" fill="#ffff00"/><rect x="582" y="56" width="6" height="5" fill="#000000"/><rect x="583" y="57" width="4" height="3" fill="#30d8e0"/><rect x="584" y="57" width="1" height="1" fill="#ffffff"/><rect x="585" y="58" width="1" height="1" fill="#ffffff"/><rect x="582" y="62" width="6" height="4" fill="#000000"/><rect x="583" y="63" width="4" height="2" fill="#30d8e0"/><rect x="584" y="63" width="1" height="1" fill="#ffffff"/><rect x="585" y="64" width="1" height="1" fill="#ffffff"/><rect x="582" y="67" width="6" height="5" fill="#000000"/><rect x="583" y="68" width="4" height="3" fill="#30d8e0"/><rect x="584" y="68" width="1" height="1" fill="#ffffff"/><rect x="585" y="69" width="1" height="1" fill="#ffffff"/><path d="M572 58.5 H579 M572 69.5 H579 M578 64 H579 M573 58.5 L578 64 L573 69.5" stroke="#000000" stroke-width="3.2" fill="none"/><path d="M572 58.5 H579 M572 69.5 H579 M578 64 H579 M573 58.5 L578 64 L573 69.5" stroke="#ffff00" stroke-width="1.4" fill="none"/><polygon points="578,55.0 582.5,58.5 578,62.0" fill="#000000"/><polygon points="578.8,56.5 581,58.5 578.8,60.5" fill="#ffff00"/><polygon points="578,66.0 582.5,69.5 578,73.0" fill="#000000"/><polygon points="578.8,67.5 581,69.5 578.8,71.5" fill="#ffff00"/><polygon points="578,60.5 582.5,64 578,67.5" fill="#000000"/><polygon points="578.8,62 581,64 578.8,66" fill="#ffff00"/><rect x="600" y="57" width="5" height="6" fill="#808080"/><rect x="601" y="58" width="2" height="1" fill="#ffffff"/><rect x="601" y="59" width="1" height="2" fill="#ffffff"/><rect x="603" y="60" width="1" height="1" fill="#ffffff"/><rect x="605" y="56" width="7" height="7" fill="#808080"/><rect x="606" y="57" width="5" height="2" fill="#ffffff"/><rect x="611" y="57" width="1" height="6" fill="#ffffff"/><rect x="606" y="62" width="6" height="1" fill="#ffffff"/><rect x="600" y="63" width="14" height="4" fill="#808080"/><rect x="613" y="64" width="1" height="3" fill="#ffffff"/><rect x="598" y="67" width="5" height="5" fill="#808080"/><rect x="604" y="67" width="5" height="5" fill="#808080"/><rect x="610" y="67" width="5" height="5" fill="#808080"/><rect x="599" y="68" width="2" height="1" fill="#ffffff"/><rect x="599" y="69" width="1" height="2" fill="#ffffff"/><rect x="605" y="68" width="2" height="1" fill="#ffffff"/><rect x="605" y="69" width="1" height="2" fill="#ffffff"/><rect x="611" y="68" width="2" height="1" fill="#ffffff"/><rect x="611" y="69" width="1" height="2" fill="#ffffff"/><rect x="613" y="68" width="1" height="3" fill="#ffffff"/><rect x="608" y="68" width="1" height="3" fill="#ffffff"/><polygon points="631.5,59.5 632.5,59.5 633.5,57.5 636.5,57.5 637.5,59.5 639.5,59.5 639.5,69.5 631.5,69.5" fill="#ffffff" stroke="#000000" stroke-width="1"/><rect x="633" y="61" width="1" height="4" fill="#000000"/><rect x="633" y="61" width="3" height="1" fill="#000000"/><rect x="635" y="62" width="1" height="1" fill="#000000"/><rect x="633" y="63" width="3" height="1" fill="#000000"/><rect x="634" y="66" width="5" height="1" fill="#000000"/><rect x="637" y="64" width="1" height="2" fill="#000000"/><rect x="635" y="64" width="2" height="1" fill="#000000"/><polygon points="634,59 637,56 644,62 641,65" fill="#000"/><polygon points="635.5,59 637,57.5 642.5,62 641,63.5" fill="#8c8c50"/><rect x="637" y="59" width="1" height="1" fill="#e0e0a0"/><rect x="639" y="60" width="1" height="1" fill="#e0e0a0"/><rect x="641" y="62" width="1" height="1" fill="#e0e0a0"/><path d="M630.5 69 L637.5 62" stroke="#ff0000" stroke-width="1.5" fill="none"/><rect x="630" y="69" width="1" height="1" fill="#400000"/><rect x="632" y="67" width="1" height="1" fill="#400000"/><rect x="634" y="65" width="1" height="1" fill="#400000"/><rect x="636" y="63" width="1" height="1" fill="#400000"/><rect x="655" y="56" width="3" height="6" fill="#000000"/><rect x="656" y="57" width="1" height="4" fill="#ffffff"/><rect x="655" y="61" width="12" height="11" fill="#000000"/><rect x="656" y="62" width="10" height="9" fill="#e0e040"/><rect x="656" y="62" width="10" height="2" fill="#ffffff"/><rect x="657" y="65" width="1" height="1" fill="#ffffff"/><rect x="658" y="65" width="1" height="1" fill="#ffffff"/><rect x="661" y="65" width="1" height="1" fill="#ffffff"/><rect x="662" y="65" width="1" height="1" fill="#ffffff"/><rect x="665" y="65" width="1" height="1" fill="#ffffff"/><rect x="656" y="66" width="1" height="1" fill="#ffffff"/><rect x="659" y="66" width="1" height="1" fill="#ffffff"/><rect x="660" y="66" width="1" height="1" fill="#ffffff"/><rect x="663" y="66" width="1" height="1" fill="#ffffff"/><rect x="664" y="66" width="1" height="1" fill="#ffffff"/><rect x="657" y="67" width="1" height="1" fill="#ffffff"/><rect x="658" y="67" width="1" height="1" fill="#ffffff"/><rect x="661" y="67" width="1" height="1" fill="#ffffff"/><rect x="662" y="67" width="1" height="1" fill="#ffffff"/><rect x="665" y="67" width="1" height="1" fill="#ffffff"/><rect x="656" y="68" width="1" height="1" fill="#ffffff"/><rect x="659" y="68" width="1" height="1" fill="#ffffff"/><rect x="660" y="68" width="1" height="1" fill="#ffffff"/><rect x="663" y="68" width="1" height="1" fill="#ffffff"/><rect x="664" y="68" width="1" height="1" fill="#ffffff"/><rect x="657" y="69" width="1" height="1" fill="#ffffff"/><rect x="658" y="69" width="1" height="1" fill="#ffffff"/><rect x="661" y="69" width="1" height="1" fill="#ffffff"/><rect x="662" y="69" width="1" height="1" fill="#ffffff"/><rect x="665" y="69" width="1" height="1" fill="#ffffff"/><rect x="656" y="70" width="1" height="1" fill="#ffffff"/><rect x="659" y="70" width="1" height="1" fill="#ffffff"/><rect x="660" y="70" width="1" height="1" fill="#ffffff"/><rect x="663" y="70" width="1" height="1" fill="#ffffff"/><rect x="664" y="70" width="1" height="1" fill="#ffffff"/><polygon points="660,60 663,57 670,63 667,66" fill="#000"/><polygon points="661.5,60 663,58.5 668.5,63 667,64.5" fill="#8c8c50"/><rect x="663" y="60" width="1" height="1" fill="#e0e0a0"/><rect x="665" y="61" width="1" height="1" fill="#e0e0a0"/><rect x="667" y="63" width="1" height="1" fill="#e0e0a0"/><path d="M656 71 L664.5 63" stroke="#ff0000" stroke-width="1.5" fill="none"/><rect x="656" y="71" width="1" height="1" fill="#400000"/><rect x="658" y="69" width="1" height="1" fill="#400000"/><rect x="660" y="67" width="1" height="1" fill="#400000"/><rect x="662" y="65" width="1" height="1" fill="#400000"/><rect x="664" y="63" width="1" height="1" fill="#400000"/><rect x="681" y="57" width="11" height="15" fill="#ffffff"/><rect x="680" y="56" width="11" height="15" fill="#808080"/><rect x="681" y="57" width="9" height="13" fill="#ffffff"/><rect x="682" y="58" width="8" height="12" fill="#c0c0c0"/><rect x="683" y="59" width="2" height="1" fill="#808080"/><rect x="684" y="61" width="6" height="1" fill="#808080"/><rect x="683" y="63" width="6" height="1" fill="#808080"/><rect x="685" y="65" width="4" height="1" fill="#808080"/><rect x="683" y="67" width="6" height="1" fill="#808080"/><rect x="693" y="58" width="1" height="11" fill="#808080"/><rect x="694" y="59" width="1" height="10" fill="#ffffff"/><polygon points="691.5,67 695,67 693.3,70" fill="#808080"/><path d="M693.5 71 L696 68.5" stroke="#ffffff" stroke-width="1" fill="none"/><polygon points="711.5,63.5 718.5,56.5 718.5,59.5 723.5,59.5 723.5,67.5 718.5,67.5 718.5,70.5" fill="#000000"/><polygon points="713.2,63.5 717.5,59 717.5,60.5 722.5,60.5 722.5,66.5 717.5,66.5 717.5,68" fill="#00ff00"/><path d="M713.8 63 L717 59.8" stroke="#00ffff" stroke-width="1" fill="none"/><rect x="719" y="65" width="1" height="1" fill="#006000"/><rect x="721" y="64" width="1" height="1" fill="#006000"/><rect x="720" y="66" width="1" height="1" fill="#006000"/><rect x="722" y="66" width="1" height="1" fill="#006000"/><polygon points="750.5,64 744,57.5 744,60.5 739,60.5 739,67.5 744,67.5 744,70.5" fill="#808080"/><path d="M744 71 L751 64" stroke="#ffffff" stroke-width="1.2" fill="none"/><rect x="741" y="62" width="2" height="1" fill="#ffffff"/><rect x="743" y="61" width="1" height="1" fill="#ffffff"/><rect x="745" y="62" width="1" height="1" fill="#ffffff"/><rect x="740" y="63" width="1" height="1" fill="#ffffff"/><rect x="744" y="63" width="1" height="1" fill="#ffffff"/><rect x="740" y="67" width="3" height="1" fill="#ffffff"/><rect x="766" y="60" width="12" height="11" fill="#000000"/><rect x="767" y="61" width="10" height="9" fill="#ffffff"/><rect x="768" y="66" width="2" height="1" fill="#000000"/><rect x="771" y="66" width="5" height="1" fill="#000000"/><rect x="768" y="68" width="2" height="1" fill="#000000"/><rect x="771" y="68" width="5" height="1" fill="#000000"/><rect x="774" y="57" width="5" height="1" fill="#000000"/><rect x="773" y="58" width="7" height="5" fill="#a8b0a8"/><rect x="780" y="57" width="2" height="7" fill="#000080"/><rect x="772" y="58" width="1" height="1" fill="#000000"/><rect x="771" y="59" width="1" height="1" fill="#000000"/><rect x="773" y="59" width="1" height="1" fill="#000000"/><rect x="770" y="60" width="1" height="1" fill="#000000"/><rect x="772" y="60" width="1" height="1" fill="#000000"/><rect x="774" y="60" width="1" height="1" fill="#000000"/><rect x="769" y="61" width="1" height="1" fill="#000000"/><rect x="771" y="61" width="1" height="1" fill="#000000"/><rect x="773" y="61" width="1" height="1" fill="#000000"/><rect x="775" y="61" width="1" height="1" fill="#000000"/><rect x="770" y="62" width="1" height="1" fill="#000000"/><rect x="772" y="62" width="1" height="1" fill="#000000"/><rect x="774" y="62" width="1" height="1" fill="#000000"/><rect x="771" y="63" width="1" height="1" fill="#000000"/><rect x="773" y="63" width="1" height="1" fill="#000000"/><rect x="772" y="64" width="1" height="1" fill="#000000"/></svg>
<div class="code"><div class="cl" style="top:5px"><span class="k">static</span> int <span class="b">proc_ide_get_identify</span>(ide_drive_t *drive, byte *buf)<span class="p">¶</span></div><div class="cl" style="top:20px">{<span class="p">¶</span></div><div class="cl" style="top:35px">    <span class="k">return</span> ide_wait_cmd(drive, (drive-&gt;media == ide_disk) ? WIN_IDENTIFY : WIN_PIDENTIFY, 0, 0, 1,<span class="p">¶</span></div><div class="cl" style="top:50px">buf);<span class="p">¶</span></div><div class="cl" style="top:65px">}<span class="p">¶</span></div><div class="cl" style="top:80px"><span class="p">¶</span></div><div class="cl" style="top:95px"><span class="k">static</span> int <span class="h">proc_ide_read_identify</span><span class="p">¶</span></div><div class="cl" style="top:110px">    (char *page, char **start, off_t off, int count, int *eof, void *data)<span class="p">¶</span></div><div class="cl" style="top:125px">{<span class="p">¶</span></div><div class="cl" style="top:140px">    ide_drive_t *drive = (ide_drive_t *)data;<span class="p">¶</span></div><div class="cl" style="top:155px">    int     len = 0, i = 0;<span class="p">¶</span></div><div class="cl" style="top:170px"><span class="p">¶</span></div><div class="cl" style="top:185px">    <span class="k">if</span> (!proc_ide_get_identify(drive, page)) {<span class="p">¶</span></div><div class="cl" style="top:200px">        unsigned short *val = ((unsigned short *)page) + 2;<span class="p">¶</span></div><div class="cl" style="top:215px">        char *out = ((char *)val) + (SECTOR_WORDS * 4);<span class="p">¶</span></div><div class="cl" style="top:230px">        page = out;<span class="p">¶</span></div><div class="cl" style="top:245px">        <span class="k">do</span> {<span class="p">¶</span></div><div class="cl" style="top:260px">            out += sprintf(out, <span class="s">"%04x%c"</span>, le16_to_cpu(*val), (++i &amp; 7) ? <span class="s">' '</span> : <span class="s">'\n'</span>);<span class="p">¶</span></div><div class="cl" style="top:275px">            val += 1;<span class="p">¶</span></div><div class="cl" style="top:290px">        } <span class="k">while</span> (i &lt; (SECTOR_WORDS * 2));<span class="p">¶</span></div><div class="cl" style="top:305px">        len = out - page;<span class="p">¶</span></div><div class="cl" style="top:320px">    }<span class="p">¶</span></div><div class="cl" style="top:335px">    PROC_IDE_READ_RETURN(page,start,off,count,eof,len);<span class="p">¶</span></div><div class="cl" style="top:350px">}<span class="p">¶</span></div><div class="cl" style="top:365px"><span class="p">¶</span></div><div class="cl" style="top:380px"><span class="k">static</span> int <span class="b">proc_ide_read_settings</span><span class="p">¶</span></div></div>
<svg style="left:0;top:0" width="791" height="476" fill="#6c6c6c" shape-rendering="crispEdges"><rect x="10" y="122" width="1" height="2"/><rect x="11" y="124" width="1" height="2"/><rect x="12" y="126" width="1" height="1"/><rect x="11" y="127" width="1" height="2"/><rect x="10" y="129" width="1" height="2"/><rect x="10" y="197" width="1" height="2"/><rect x="11" y="199" width="1" height="2"/><rect x="12" y="201" width="1" height="1"/><rect x="11" y="202" width="1" height="2"/><rect x="10" y="204" width="1" height="2"/><rect x="10" y="227" width="1" height="2"/><rect x="11" y="229" width="1" height="2"/><rect x="12" y="231" width="1" height="1"/><rect x="11" y="232" width="1" height="2"/><rect x="10" y="234" width="1" height="2"/><rect x="115" y="227" width="1" height="2"/><rect x="116" y="229" width="1" height="2"/><rect x="117" y="231" width="1" height="1"/><rect x="116" y="232" width="1" height="2"/><rect x="115" y="234" width="1" height="2"/><rect x="10" y="242" width="1" height="2"/><rect x="11" y="244" width="1" height="2"/><rect x="12" y="246" width="1" height="1"/><rect x="11" y="247" width="1" height="2"/><rect x="10" y="249" width="1" height="2"/><rect x="59" y="242" width="1" height="2"/><rect x="60" y="244" width="1" height="2"/><rect x="61" y="246" width="1" height="1"/><rect x="60" y="247" width="1" height="2"/><rect x="59" y="249" width="1" height="2"/><rect x="66" y="242" width="1" height="2"/><rect x="67" y="244" width="1" height="2"/><rect x="68" y="246" width="1" height="1"/><rect x="67" y="247" width="1" height="2"/><rect x="66" y="249" width="1" height="2"/><rect x="10" y="272" width="1" height="2"/><rect x="11" y="274" width="1" height="2"/><rect x="12" y="276" width="1" height="1"/><rect x="11" y="277" width="1" height="2"/><rect x="10" y="279" width="1" height="2"/><rect x="10" y="287" width="1" height="2"/><rect x="11" y="289" width="1" height="2"/><rect x="12" y="291" width="1" height="1"/><rect x="11" y="292" width="1" height="2"/><rect x="10" y="294" width="1" height="2"/><rect x="38" y="287" width="1" height="2"/><rect x="39" y="289" width="1" height="2"/><rect x="40" y="291" width="1" height="1"/><rect x="39" y="292" width="1" height="2"/><rect x="38" y="294" width="1" height="2"/><rect x="10" y="302" width="1" height="2"/><rect x="11" y="304" width="1" height="2"/><rect x="12" y="306" width="1" height="1"/><rect x="11" y="307" width="1" height="2"/><rect x="10" y="309" width="1" height="2"/><rect x="38" y="302" width="1" height="2"/><rect x="39" y="304" width="1" height="2"/><rect x="40" y="306" width="1" height="1"/><rect x="39" y="307" width="1" height="2"/><rect x="38" y="309" width="1" height="2"/><rect x="10" y="317" width="1" height="2"/><rect x="11" y="319" width="1" height="2"/><rect x="12" y="321" width="1" height="1"/><rect x="11" y="322" width="1" height="2"/><rect x="10" y="324" width="1" height="2"/><rect x="38" y="317" width="1" height="2"/><rect x="39" y="319" width="1" height="2"/><rect x="40" y="321" width="1" height="1"/><rect x="39" y="322" width="1" height="2"/><rect x="38" y="324" width="1" height="2"/><rect x="10" y="332" width="1" height="2"/><rect x="11" y="334" width="1" height="2"/><rect x="12" y="336" width="1" height="1"/><rect x="11" y="337" width="1" height="2"/><rect x="10" y="339" width="1" height="2"/><rect x="38" y="332" width="1" height="2"/><rect x="39" y="334" width="1" height="2"/><rect x="40" y="336" width="1" height="1"/><rect x="39" y="337" width="1" height="2"/><rect x="38" y="339" width="1" height="2"/><rect x="10" y="347" width="1" height="2"/><rect x="11" y="349" width="1" height="2"/><rect x="12" y="351" width="1" height="1"/><rect x="11" y="352" width="1" height="2"/><rect x="10" y="354" width="1" height="2"/><rect x="38" y="347" width="1" height="2"/><rect x="39" y="349" width="1" height="2"/><rect x="40" y="351" width="1" height="1"/><rect x="39" y="352" width="1" height="2"/><rect x="38" y="354" width="1" height="2"/><rect x="66" y="347" width="1" height="2"/><rect x="67" y="349" width="1" height="2"/><rect x="68" y="351" width="1" height="1"/><rect x="67" y="352" width="1" height="2"/><rect x="66" y="354" width="1" height="2"/><rect x="10" y="362" width="1" height="2"/><rect x="11" y="364" width="1" height="2"/><rect x="12" y="366" width="1" height="1"/><rect x="11" y="367" width="1" height="2"/><rect x="10" y="369" width="1" height="2"/><rect x="38" y="362" width="1" height="2"/><rect x="39" y="364" width="1" height="2"/><rect x="40" y="366" width="1" height="1"/><rect x="39" y="367" width="1" height="2"/><rect x="38" y="369" width="1" height="2"/><rect x="66" y="362" width="1" height="2"/><rect x="67" y="364" width="1" height="2"/><rect x="68" y="366" width="1" height="1"/><rect x="67" y="367" width="1" height="2"/><rect x="66" y="369" width="1" height="2"/><rect x="10" y="377" width="1" height="2"/><rect x="11" y="379" width="1" height="2"/><rect x="12" y="381" width="1" height="1"/><rect x="11" y="382" width="1" height="2"/><rect x="10" y="384" width="1" height="2"/><rect x="38" y="377" width="1" height="2"/><rect x="39" y="379" width="1" height="2"/><rect x="40" y="381" width="1" height="1"/><rect x="39" y="382" width="1" height="2"/><rect x="38" y="384" width="1" height="2"/><rect x="10" y="392" width="1" height="2"/><rect x="11" y="394" width="1" height="2"/><rect x="12" y="396" width="1" height="1"/><rect x="11" y="397" width="1" height="2"/><rect x="10" y="399" width="1" height="2"/><rect x="38" y="392" width="1" height="2"/><rect x="39" y="394" width="1" height="2"/><rect x="40" y="396" width="1" height="1"/><rect x="39" y="397" width="1" height="2"/><rect x="38" y="399" width="1" height="2"/><rect x="10" y="407" width="1" height="2"/><rect x="11" y="409" width="1" height="2"/><rect x="12" y="411" width="1" height="1"/><rect x="11" y="412" width="1" height="2"/><rect x="10" y="414" width="1" height="2"/><rect x="10" y="422" width="1" height="2"/><rect x="11" y="424" width="1" height="2"/><rect x="12" y="426" width="1" height="1"/><rect x="11" y="427" width="1" height="2"/><rect x="10" y="429" width="1" height="2"/><rect x="12" y="84" width="1" height="2"/><rect x="14" y="84" width="1" height="2"/></svg>
<div class="list"><div class="sel1"><div class="sel2"></div><div class="sel3"></div></div><div class="li" style="top:1px">create_proc_ide_drives</div><div class="li" style="top:16px">create_proc_ide_interfaces</div><div class="li" style="top:31px">ide_add_proc_entries</div><div class="li" style="top:46px">ide_getdigit <span class="f">(f)</span></div><div class="li" style="top:61px">ide_getxdigit <span class="f">(f)</span></div><div class="li" style="top:76px">ide_remove_proc_entries</div><div class="li" style="top:91px">proc_ide_create</div><div class="li" style="top:106px">proc_ide_destroy</div><div class="li" style="top:121px">proc_ide_get_identify</div><div class="li" style="top:136px">proc_ide_readlink</div><div class="li" style="top:151px">proc_ide_read_capacity</div><div class="li" style="top:166px">proc_ide_read_channel</div><div class="li" style="top:181px">proc_ide_read_config</div><div class="li" style="top:196px">proc_ide_read_dmodel</div><div class="li" style="top:211px">proc_ide_read_driver</div><div class="li" style="top:226px">proc_ide_read_drivers</div><div class="li" style="top:241px">proc_ide_read_geometry</div><div class="li sel" style="top:256px">proc_ide_read_identify</div><div class="li" style="top:271px">proc_ide_read_imodel</div><div class="li" style="top:286px">proc_ide_read_mate</div><div class="li" style="top:301px">proc_ide_read_media</div><div class="li" style="top:316px">proc_ide_read_settings</div><div class="li" style="top:331px">proc_ide_write_config</div><div class="li" style="top:346px">proc_ide_write_driver</div><div class="li" style="top:361px">proc_ide_write_settings</div></div>
</body></html>
